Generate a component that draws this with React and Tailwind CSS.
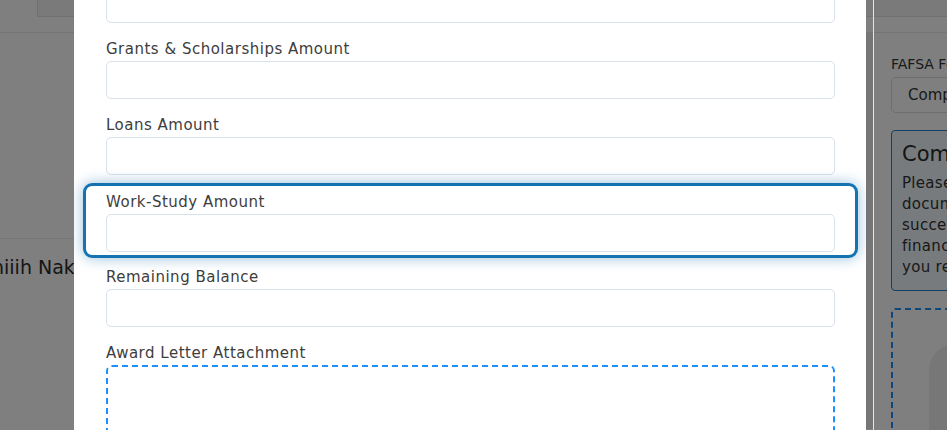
import React from "react";

const fields = [
  { label: null },
  { label: "Grants & Scholarships Amount" },
  { label: "Loans Amount" },
  { label: "Work-Study Amount", focused: true },
  { label: "Remaining Balance" },
];

function Field({ label, focused }) {
  const body = (
    <>
      {label && (
        <label className="block text-[15px] leading-[24px] tracking-[0.5px] text-[#3d3d3d]">
          {label}
        </label>
      )}
      <input
        type="text"
        className="block h-[38px] w-full rounded-[5px] border border-[#d9e2ea] bg-white px-3 outline-none"
      />
    </>
  );

  if (focused) {
    return (
      <div className="-mx-[23px] -mt-[6px] -mb-[7px] rounded-[9px] border-[3px] border-[#1673b2] px-[20px] pt-[4px] pb-[3px] shadow-[0_0_14px_rgba(22,115,178,0.45)]">
        {body}
      </div>
    );
  }
  return <div>{body}</div>;
}

export default function App() {
  return (
    <div className="relative h-[430px] w-[947px] overflow-hidden bg-white font-['DejaVu_Sans',sans-serif] text-[#333]">
      {/* page behind the dialog */}
      <div className="flex h-[17px] pl-[37px]">
        <div className="flex-1 border-b border-l border-[#e2e2e2] bg-[#f4f4f4]" />
      </div>
      <div className="h-[16px] border-b border-[#eaeaea]" />
      <div className="flex">
        <div className="w-[866px] shrink-0">
          <div className="h-[206px] border-b border-[#ececec]" />
          <div className="mt-[14px] w-[74px] overflow-hidden">
            <div className="-ml-[8px] whitespace-nowrap text-[19px] leading-[28px] text-[#2a2a2a]">
              hiiih Nak
            </div>
          </div>
        </div>
        <div className="h-[396px] w-[7px] shrink-0 bg-[#ededed]" />
        <div className="w-px shrink-0" />
        <div className="w-[290px] shrink-0 pl-[17px] pt-[21px]">
          <div className="whitespace-nowrap text-[14px] leading-[20px] text-[#333]">FAFSA Form Status</div>
          <div className="mt-[3px] flex h-[36px] items-center whitespace-nowrap rounded-[5px] border border-[#dcdcdc] pl-[16px] text-[15px]">
            Completed
          </div>
          <div className="mt-[17px] h-[161px] whitespace-nowrap rounded-[4px] border border-[#2a7fc0] bg-[#eef7fb] pl-[10px] pt-[9px]">
            <div className="text-[21px] leading-[28px] text-[#2a2a2a]">Complete Your Award Letter</div>
            <p className="mt-[5px] text-[15px] leading-[21px] tracking-[0.3px] text-[#333]">
              Please upload your award letter
              <br />
              documents so we can review them
              <br />
              successfully and estimate your total
              <br />
              financial aid package for the year
              <br />
              you recently applied for.
            </p>
          </div>
          <div className="mt-[17px] h-[140px] rounded-[4px] border-2 border-dashed border-[#1d8ff5] pl-[36px] pt-[34px]">
            <div className="h-[120px] w-[200px] rounded-[26px] bg-[#eeeeee]" />
          </div>
        </div>
      </div>

      {/* backdrop */}
      <div className="absolute inset-0 bg-black/50" />
      <div className="absolute top-0 bottom-0 left-[873px] w-px bg-[#dfe7e9]" />

      {/* dialog */}
      <div className="absolute top-0 left-[74px] h-[430px] w-[792px] overflow-hidden bg-white pl-[32px] pr-[31px]">
        <div className="-mt-[15px] flex flex-col gap-[14px]">
          {fields.map((f, i) => (
            <Field key={i} label={f.label} focused={f.focused} />
          ))}
          <div>
            <label className="block text-[15px] leading-[24px] tracking-[0.5px] text-[#3d3d3d]">
              Award Letter Attachment
            </label>
            <div className="h-[140px] rounded-[6px] border-2 border-dashed border-[#1e8fff]" />
          </div>
        </div>
      </div>
    </div>
  );
}
